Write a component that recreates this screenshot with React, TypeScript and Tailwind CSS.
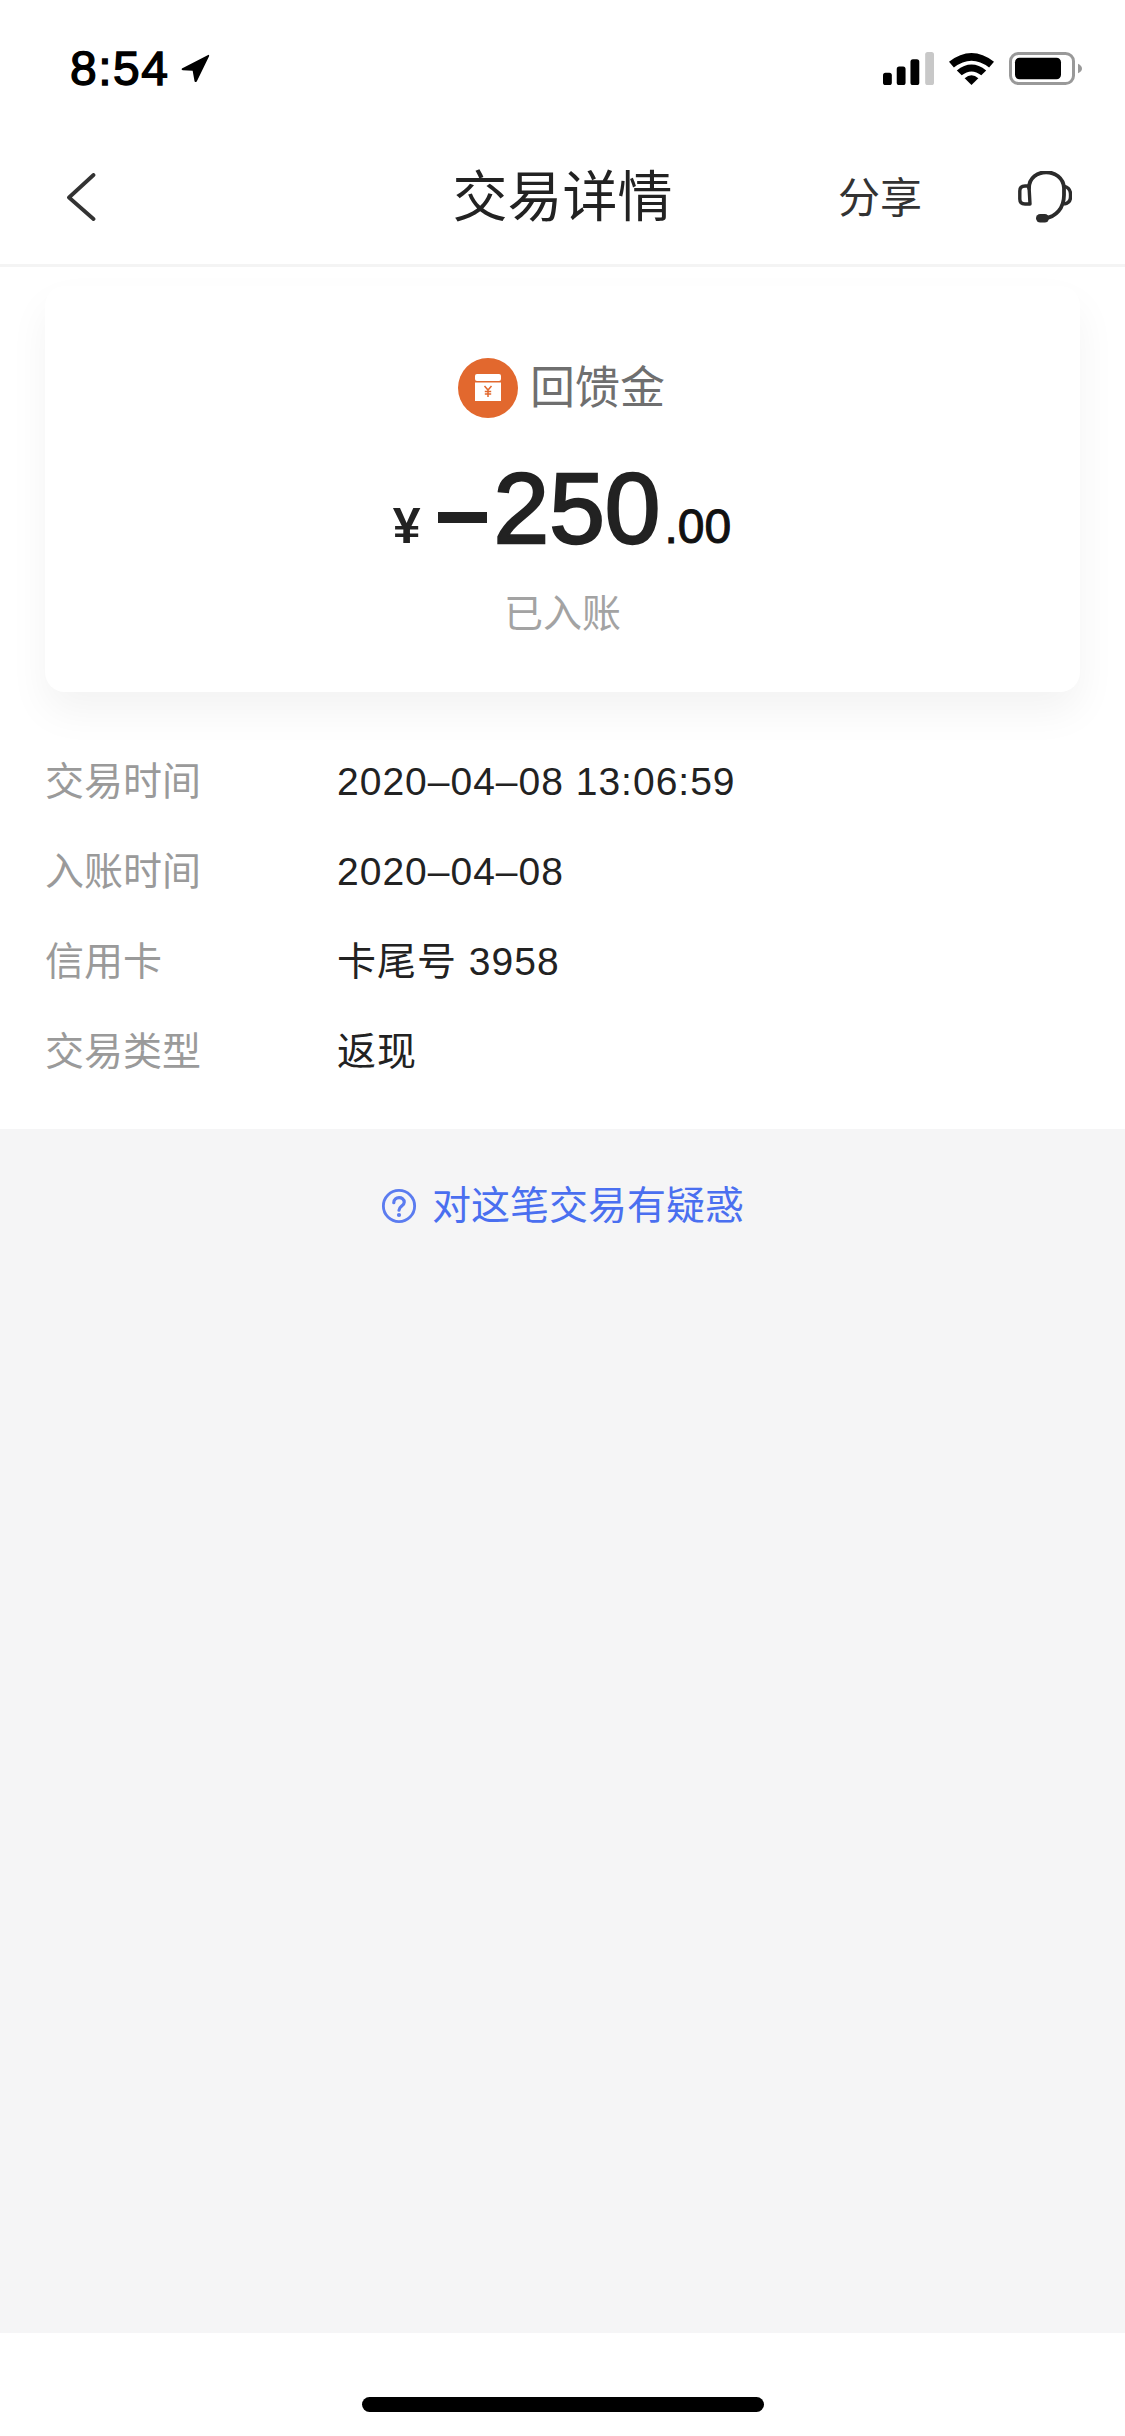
const FONT = "font-['Liberation_Sans','Noto_Sans_CJK_SC',sans-serif]";

const ROWS = [
  { label: "交易时间", value: "2020-04-08 13:06:59" },
  { label: "入账时间", value: "2020-04-08" },
  { label: "信用卡", value: "卡尾号 3958" },
  { label: "交易类型", value: "返现" },
];

function StatusBar() {
  return (
    <div className="h-[88px] pt-[52px] pl-[70px] pr-[43px] flex items-start justify-between">
      <div className="flex items-center h-[34px] gap-[11px]">
        <span className="text-[48px] leading-none text-black tracking-[1.5px] [-webkit-text-stroke:1.4px_#000]">8:54</span>
        <svg width="30" height="30" viewBox="0 0 32 32" className="-mt-[2px]">
          <path d="M2 16.5 L30 2 Q31.5 1.5 31 3.5 L18 30 Q16.5 32 15.5 30 L13.5 19 L3 18.5 Q1 18 2 16.5Z" fill="#000" />
        </svg>
      </div>
      <div className="flex items-start gap-[15px]">
        <svg width="51" height="33" viewBox="0 0 52 32" preserveAspectRatio="none">
          <rect x="0" y="20" width="9" height="12" rx="2.5" fill="#000" />
          <rect x="14" y="14" width="9" height="18" rx="2.5" fill="#000" />
          <rect x="28" y="7" width="9" height="25" rx="2.5" fill="#000" />
          <rect x="43" y="0" width="9" height="32" rx="2.5" fill="#c8c8c8" />
        </svg>
        <svg width="45" height="33" viewBox="0 0 46 34" preserveAspectRatio="none">
          <path d="M0 10 Q23 -8 46 10 L41 16 Q23 2 5 16Z" fill="#000" />
          <path d="M8 19 Q23 7 38 19 L33 24 Q23 16 13 24Z" fill="#000" />
          <path d="M16 27 Q23 21 30 27 L23 34Z" fill="#000" />
        </svg>
        <svg width="73" height="33" viewBox="0 0 73 34" preserveAspectRatio="none">
          <rect x="1.5" y="1.5" width="63" height="31" rx="8" fill="none" stroke="#999" strokeWidth="3" />
          <rect x="6" y="6" width="46" height="22" rx="4.5" fill="#000" />
          <path d="M69 12 Q73 14 73 17 Q73 20 69 22Z" fill="#999" />
        </svg>
      </div>
    </div>
  );
}

function NavBar() {
  return (
    <div className="relative h-[179px] border-b-[3px] border-[#f4f4f4] flex items-center justify-between pl-[66px] pr-[53px] pt-[42px]">
      <svg width="30" height="48" viewBox="0 0 30 48" fill="none">
        <path d="M27.5 2 L3 24.5 L27.5 46" stroke="#333" strokeWidth="3.8" strokeLinecap="round" strokeLinejoin="round" />
      </svg>
      <span className="absolute left-0 right-0 top-[77px] text-center text-[55px] leading-[64px] text-[#222]">交易详情</span>
      <div className="flex items-center gap-[96px]">
        <span className="text-[42px] leading-none text-[#333] mt-[3px]">分享</span>
        <svg width="54" height="52" viewBox="0 0 54 52" fill="none">
          <path d="M11 17 C11 -4 45 -4 46 17 V24 C46 37 38 46 27 47" stroke="#2b2b2b" strokeWidth="3.8" strokeLinecap="round" />
          <path d="M11 15 H7 Q1.8 15 1.8 20 V28 Q1.8 33 7 33 H12Z" stroke="#2b2b2b" strokeWidth="3.4" strokeLinejoin="round" />
          <path d="M46 15 Q52.5 17 52.5 23 V26 Q52.5 32 46 33" stroke="#2b2b2b" strokeWidth="3.4" strokeLinejoin="round" />
          <rect x="18" y="43" width="13" height="8.5" rx="4.2" fill="#2b2b2b" />
        </svg>
      </div>
    </div>
  );
}

function SummaryCard() {
  return (
    <div className="mx-[45px] mt-[19px] h-[406px] bg-white rounded-[20px] shadow-[0_20px_40px_rgba(0,0,0,0.05)] flex flex-col items-center">
      <div className="flex items-center mt-[72px] gap-[12px] h-[60px] -ml-[2px]">
        <svg width="60" height="60" viewBox="0 0 60 60">
          <circle cx="30" cy="30" r="30" fill="#e2682e" />
          <rect x="17" y="16" width="26" height="7" rx="2" fill="#fff" />
          <rect x="17" y="24.5" width="26" height="18.5" fill="#fff" />
          <path d="M26.5 28 L30 32 L33.5 28 M30 32 V39 M26.8 33.5 H33.2 M26.8 36 H33.2" stroke="#e2682e" strokeWidth="1.5" fill="none" />
        </svg>
        <span className="text-[45px] leading-none text-[#6f6f6f]">回馈金</span>
      </div>
      <div className="flex items-baseline mt-[52px] h-[76px] text-[#222] -ml-[1px]">
        <span className="text-[50px] font-bold leading-none mr-[17px]">¥</span>
        <span className="text-[100px] leading-[76px] [-webkit-text-stroke:2.4px_#222]">
          <span className="inline-block w-[49px] h-[11px] bg-[#222] align-[20px] mr-[7px]" />
          250
        </span>
        <span className="text-[48px] leading-none text-[#111] ml-[4px] [-webkit-text-stroke:1px_#111]">.00</span>
      </div>
      <span className="mt-[45px] text-[39px] leading-[46px] text-[#a3a3a3]">已入账</span>
    </div>
  );
}

function Details() {
  return (
    <div className="px-[45px] pt-[45px] pb-[32px] flex flex-col">
      {ROWS.map((r) => (
        <div key={r.label} className="flex items-center h-[90px] text-[39px]">
          <span className="w-[292px] text-[#9a9a9a]">{r.label}</span>
          <span className="text-[#222] tracking-[1px]">{r.value.replace(/-/g, "–")}</span>
        </div>
      ))}
    </div>
  );
}

export default function App() {
  return (
    <div className={`w-[1125px] h-[2436px] bg-white flex flex-col ${FONT}`}>
      <StatusBar />
      <NavBar />
      <SummaryCard />
      <Details />
      <div className="flex-1 bg-[#f5f5f6] flex justify-center pt-[54px]">
        <div className="flex items-center h-[46px] gap-[15px] text-[39px] text-[#4a6ff0]">
          <svg width="36" height="36" viewBox="0 0 38 38" fill="none">
            <circle cx="19" cy="19" r="16.5" stroke="#5b7cf0" strokeWidth="3" />
            <path d="M13.5 15.5 C13.5 8.5 24.5 8.5 24.5 15 C24.5 19 19 19 19 23.5" stroke="#5b7cf0" strokeWidth="3.4" strokeLinecap="round" />
            <circle cx="19" cy="28.5" r="2.2" fill="#5b7cf0" />
          </svg>
          <span>对这笔交易有疑惑</span>
        </div>
      </div>
      <div className="h-[103px] bg-white flex justify-center pt-[64px]">
        <div className="w-[402px] h-[15px] rounded-full bg-black" />
      </div>
    </div>
  );
}
